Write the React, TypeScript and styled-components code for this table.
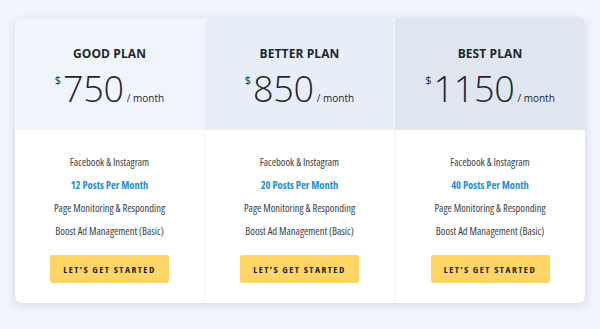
import React from "react";
import styled, { createGlobalStyle } from "styled-components";

const Global = createGlobalStyle`
  html, body { margin: 0; padding: 0; background: #f2f5fb; }
  * { box-sizing: border-box; }
`;

const Page = styled.div`
  width: 600px;
  height: 329px;
  padding: 18px 15px 0;
  background: #f2f5fb;
`;

const Card = styled.div`
  display: grid;
  grid-template-columns: repeat(3, 1fr);
  width: 570px;
  height: 285px;
  background: #fff;
  border-radius: 7px;
  overflow: hidden;
  box-shadow: 0 2px 10px rgba(30, 45, 80, 0.16);
`;

const Column = styled.div<{ $last?: boolean }>`
  display: flex;
  flex-direction: column;
  border-right: ${(p) => (p.$last ? "none" : "1px solid #f1f3f7")};
`;

const Head = styled.div<{ $bg: string }>`
  height: 112px;
  background: ${(p) => p.$bg};
  display: flex;
  flex-direction: column;
  align-items: center;
  padding-top: 28px;
  font-family: "Open Sans", sans-serif;
  color: #22262d;
`;

const Title = styled.div`
  font-size: 12px;
  font-weight: 700;
  letter-spacing: 0.1px;
  line-height: 16px;
`;

const Price = styled.div`
  display: flex;
  align-items: flex-start;
  margin-top: 9px;
  line-height: 1;
`;

const Currency = styled.span`
  font-size: 11px;
  margin-top: 3px;
  margin-right: 2px;
`;

const Amount = styled.span`
  font-size: 36px;
  font-weight: 300;
  letter-spacing: -0.3px;
`;

const Period = styled.span`
  font-size: 10px;
  align-self: flex-end;
  margin-left: 3px;
  margin-bottom: 4px;
`;

const Body = styled.div`
  flex: 1;
  display: flex;
  flex-direction: column;
  align-items: center;
  padding-top: 25px;
  font-family: "Open Sans", sans-serif;
  font-stretch: 80%;
`;

const Feature = styled.div<{ $accent?: boolean }>`
  font-size: 10.5px;
  line-height: 14px;
  height: 23px;
  color: ${(p) => (p.$accent ? "#1b8fd8" : "#3a3d42")};
  font-weight: ${(p) => (p.$accent ? 700 : 400)};
`;

const Button = styled.button`
  margin-top: 8px;
  width: 119px;
  height: 28px;
  border: none;
  background: #ffd665;
  border-radius: 2px;
  font-family: "Open Sans", sans-serif;
  font-stretch: 80%;
  font-weight: 700;
  font-size: 9.5px;
  letter-spacing: 1.5px;
  color: #1f2024;
  padding: 0;
`;

const plans = [
  { name: "GOOD PLAN", price: "750", posts: 12, bg: "#f0f4fb" },
  { name: "BETTER PLAN", price: "850", posts: 20, bg: "#e8eef8" },
  { name: "BEST PLAN", price: "1150", posts: 40, bg: "#dfe6f0" },
];

export default function App() {
  return (
    <Page>
      <Global />
      <Card>
        {plans.map((p, i) => (
          <Column key={p.name} $last={i === plans.length - 1}>
            <Head $bg={p.bg}>
              <Title>{p.name}</Title>
              <Price>
                <Currency>$</Currency>
                <Amount>{p.price}</Amount>
                <Period>/ month</Period>
              </Price>
            </Head>
            <Body>
              <Feature>Facebook &amp; Instagram</Feature>
              <Feature $accent>{p.posts} Posts Per Month</Feature>
              <Feature>Page Monitoring &amp; Responding</Feature>
              <Feature>Boost Ad Management (Basic)</Feature>
              <Button>LET'S GET STARTED</Button>
            </Body>
          </Column>
        ))}
      </Card>
    </Page>
  );
}
